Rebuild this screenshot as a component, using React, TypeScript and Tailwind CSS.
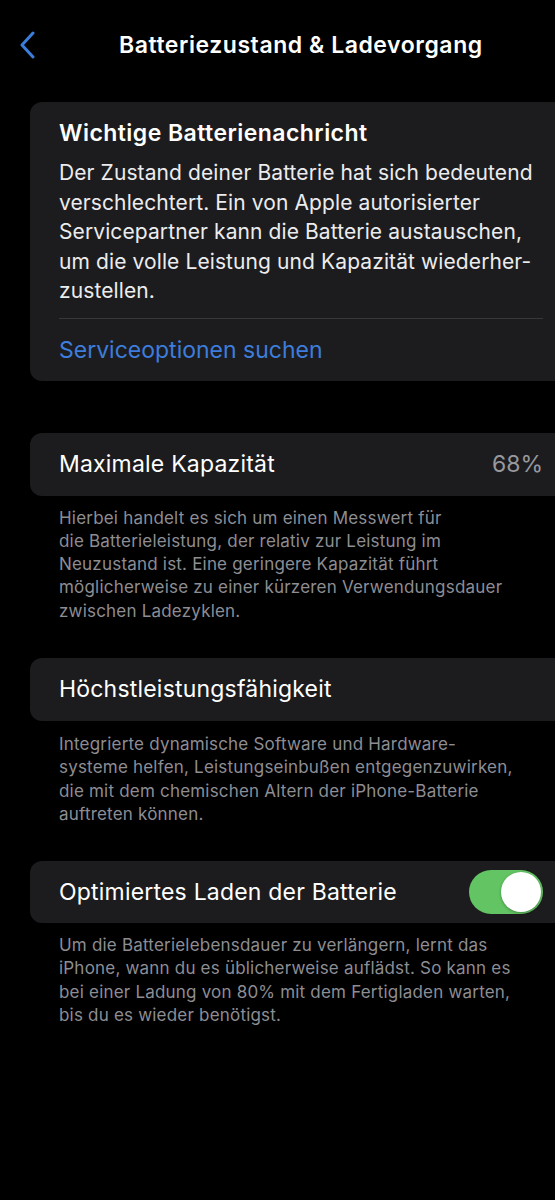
import React from "react";

const FONT = { fontFamily: "Inter, 'Noto Sans', 'Liberation Sans', sans-serif" };

function Card({ children, className = "" }: { children: React.ReactNode; className?: string }) {
  return (
    <div className={`w-[543px] shrink-0 rounded-[12px] bg-[#1c1c1e] pl-[29px] pr-[30px] ${className}`}>
      {children}
    </div>
  );
}

function Footer({ lines }: { lines: string[] }) {
  return (
    <p className="whitespace-nowrap pl-[29px] text-[17px] leading-[23.3px] tracking-[0.2px] text-[#8d8d93]">
      {lines.map((l, i) => (
        <React.Fragment key={i}>
          {l}
          {i < lines.length - 1 && <br />}
        </React.Fragment>
      ))}
    </p>
  );
}

function Toggle() {
  return (
    <div className="relative h-[44px] w-[74px] rounded-full bg-[#62c462]">
      <div className="absolute right-[2px] top-[2px] h-[40px] w-[40px] rounded-full bg-white shadow-[0_1px_3px_rgba(0,0,0,0.3)]" />
    </div>
  );
}

export default function App() {
  return (
    <div className="min-h-[1200px] w-full overflow-hidden bg-black text-white" style={FONT}>
      {/* nav bar */}
      <div className="flex h-[90px] items-center">
        <svg className="ml-[18px]" width="20" height="28" viewBox="0 0 20 28" fill="none" stroke="#3b7ddb" strokeWidth="3" strokeLinecap="round" strokeLinejoin="round">
          <path d="M15 2L4 14l11 12" />
        </svg>
        <h1 className="ml-[81px] whitespace-nowrap text-[23px] font-semibold tracking-[0.55px]">
          Batteriezustand &amp; Ladevorgang
        </h1>
      </div>

      <div className="flex flex-col pl-[30px] pt-[12px]">
        {/* notice */}
        <Card className="pt-[17px] pb-[17px]">
          <h2 className="text-[23px] font-semibold leading-[28px] tracking-[0.45px]">Wichtige Batterienachricht</h2>
          <p className="mt-[11px] whitespace-nowrap text-[21px] leading-[29.5px] tracking-[0.1px] text-[#ececee]">
            Der Zustand deiner Batterie hat sich bedeutend
            <br />
            verschlechtert. Ein von Apple autorisierter
            <br />
            Servicepartner kann die Batterie austauschen,
            <br />
            um die volle Leistung und Kapazität wiederher-
            <br />
            zustellen.
          </p>
          <div className="mt-[12px] h-px bg-[#38383a]" />
          <div className="pt-[17px] text-[23px] leading-[28px] text-[#3d7ddc]">Serviceoptionen suchen</div>
        </Card>

        <div className="mt-[52px]">
          <Card className="flex h-[63px] items-center justify-between">
            <span className="text-[23px] tracking-[0.2px]">Maximale Kapazität</span>
            <span className="text-[23px] text-[#98989e]">68%</span>
          </Card>
          <div className="pt-[11px]">
            <Footer
              lines={[
                "Hierbei handelt es sich um einen Messwert für",
                "die Batterieleistung, der relativ zur Leistung im",
                "Neuzustand ist. Eine geringere Kapazität führt",
                "möglicherweise zu einer kürzeren Verwendungsdauer",
                "zwischen Ladezyklen.",
              ]}
            />
          </div>
        </div>

        <div className="mt-[35px]">
          <Card className="flex h-[63px] items-center">
            <span className="text-[23px] tracking-[0.2px]">Höchstleistungsfähigkeit</span>
          </Card>
          <div className="pt-[12px]">
            <Footer
              lines={[
                "Integrierte dynamische Software und Hardware-",
                "systeme helfen, Leistungseinbußen entgegenzuwirken,",
                "die mit dem chemischen Altern der iPhone-Batterie",
                "auftreten können.",
              ]}
            />
          </div>
        </div>

        <div className="mt-[35px]">
          <Card className="flex h-[62px] items-center justify-between">
            <span className="text-[23px] tracking-[0.2px]">Optimiertes Laden der Batterie</span>
            <Toggle />
          </Card>
          <div className="pt-[11px]">
            <Footer
              lines={[
                "Um die Batterielebensdauer zu verlängern, lernt das",
                "iPhone, wann du es üblicherweise auflädst. So kann es",
                "bei einer Ladung von 80% mit dem Fertigladen warten,",
                "bis du es wieder benötigst.",
              ]}
            />
          </div>
        </div>
      </div>
    </div>
  );
}
